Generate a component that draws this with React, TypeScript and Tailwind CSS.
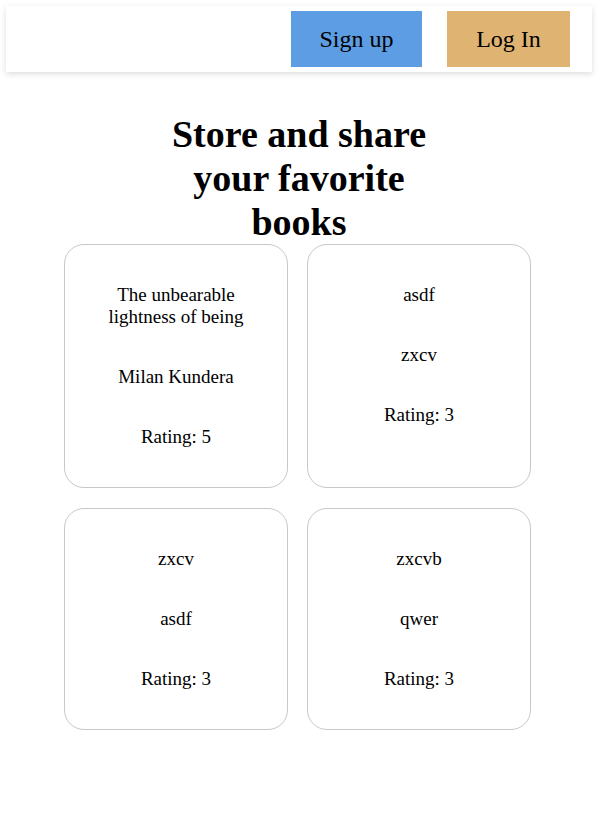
// Book shelf landing: top bar with auth buttons, headline, grid of book cards.

type Book = { title: string; author: string; rating: number }

const books: Book[] = [
  { title: 'The unbearable lightness of being', author: 'Milan Kundera', rating: 5 },
  { title: 'asdf', author: 'zxcv', rating: 3 },
  { title: 'zxcv', author: 'asdf', rating: 3 },
  { title: 'zxcvb', author: 'qwer', rating: 3 },
]

function BookCard({ book }: { book: Book }) {
  return (
    <div className="flex flex-col items-center gap-[38px] rounded-[20px] border border-[#c8c8c8] px-5 py-[39px] text-center text-[19px] leading-[22px]">
      <p>{book.title}</p>
      <p>{book.author}</p>
      <p>Rating: {book.rating}</p>
    </div>
  )
}

export default function App() {
  return (
    <div className="min-h-screen bg-white text-black" style={{ fontFamily: '"Liberation Serif", "Times New Roman", serif' }}>

      {/* ── Top bar ───────────────────────────────────────── */}
      <header className="m-[6px] flex h-[66px] items-start justify-end gap-[25px] bg-white pr-[22px] pt-[5px] shadow-[0_2px_6px_rgba(0,0,0,0.14)]">
        <button className="h-[56px] w-[131px] bg-[#5d9de3] text-[24px] leading-none">
          Sign up
        </button>
        <button className="h-[56px] w-[123px] bg-[#dfb371] text-[24px] leading-none">
          Log In
        </button>
      </header>

      {/* ── Headline ──────────────────────────────────────── */}
      <h1 className="mx-auto mt-[40px] w-[300px] text-center text-[38px] font-bold leading-[44px]">
        Store and share your favorite books
      </h1>

      {/* ── Cards ─────────────────────────────────────────── */}
      <div className="grid grid-cols-[224px_224px] gap-x-[19px] gap-y-5 pl-[64px]">
        {books.map((b) => (
          <BookCard key={b.title} book={b} />
        ))}
      </div>
    </div>
  )
}
